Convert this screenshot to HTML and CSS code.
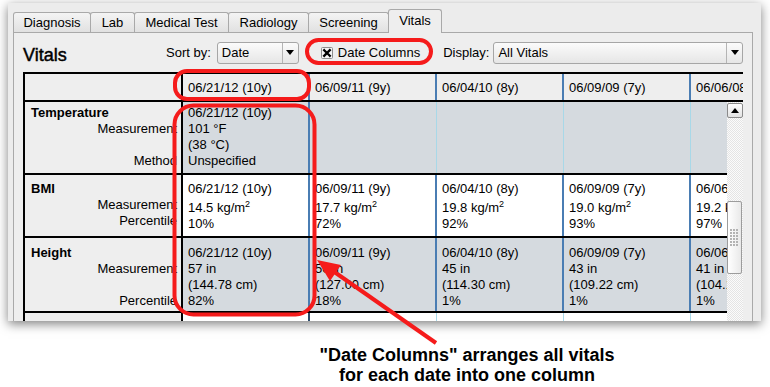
FILE: index.html
```html
<!DOCTYPE html>
<html>
<head>
<meta charset="utf-8">
<link rel="stylesheet" href="styles.css">
</head>
<body>
<div class="window">
  <div class="tabs">
    <div class="tab w-diag">Diagnosis</div>
    <div class="tab w-lab">Lab</div>
    <div class="tab w-med">Medical Test</div>
    <div class="tab w-rad">Radiology</div>
    <div class="tab w-scr">Screening</div>
    <div class="tab active w-vit">Vitals</div>
  </div>
  <div class="panel">
    <div class="toolbar">
      <div class="title">Vitals</div>
      <span class="lbl">Sort by:</span>
      <div class="select sort"><span class="val">Date</span><span class="arr"></span></div>
      <div class="check">
        <svg class="box" width="12" height="12" viewBox="0 0 12 12"><rect x="0.5" y="0.5" width="11" height="11" rx="1" fill="#f4f4f4" stroke="#8e8e8e"/><path d="M3.2 3.2L8.8 8.8M8.8 3.2L3.2 8.8" stroke="#000" stroke-width="2.3" stroke-linecap="square"/></svg>
        <span>Date Columns</span>
      </div>
      <span class="lbl disp">Display:</span>
      <div class="select display"><span class="val">All Vitals</span><span class="arr"></span></div>
    </div>
    <div class="grid">
      <div class="head">
        <div class="lab"></div>
        <div class="hc">06/21/12 (10y)</div>
        <div class="hc">06/09/11 (9y)</div>
        <div class="hc">06/04/10 (8y)</div>
        <div class="hc">06/09/09 (7y)</div>
        <div class="hc">06/06/08 (6y)</div>
      </div>
      <div class="bodywrap">
        <div class="body">
          <div class="row grey r1">
            <div class="lab"><div class="name">Temperature</div><div class="sub">Measurement</div><div class="sub">&nbsp;</div><div class="sub">Method</div></div>
            <div class="c f"><div>06/21/12 (10y)</div><div>101 °F</div><div>(38 °C)</div><div>Unspecified</div></div>
            <div class="c"></div>
            <div class="c"></div>
            <div class="c"></div>
            <div class="c"></div>
          </div>
          <div class="row white r2">
            <div class="lab"><div class="name">BMI</div><div class="sub">Measurement</div><div class="sub">Percentile</div></div>
            <div class="c f"><div>06/21/12 (10y)</div><div class="m">14.5 kg/m<sup>2</sup></div><div>10%</div></div>
            <div class="c f"><div>06/09/11 (9y)</div><div class="m">17.7 kg/m<sup>2</sup></div><div>72%</div></div>
            <div class="c f"><div>06/04/10 (8y)</div><div class="m">19.8 kg/m<sup>2</sup></div><div>92%</div></div>
            <div class="c f"><div>06/09/09 (7y)</div><div class="m">19.0 kg/m<sup>2</sup></div><div>93%</div></div>
            <div class="c f"><div>06/06/08 (6y)</div><div class="m">19.2 kg/m<sup>2</sup></div><div>97%</div></div>
          </div>
          <div class="row grey r3">
            <div class="lab"><div class="name">Height</div><div class="sub">Measurement</div><div class="sub">&nbsp;</div><div class="sub">Percentile</div></div>
            <div class="c f"><div>06/21/12 (10y)</div><div>57 in</div><div>(144.78 cm)</div><div>82%</div></div>
            <div class="c f"><div>06/09/11 (9y)</div><div>50 in</div><div>(127.00 cm)</div><div>18%</div></div>
            <div class="c f"><div>06/04/10 (8y)</div><div>45 in</div><div>(114.30 cm)</div><div>1%</div></div>
            <div class="c f"><div>06/09/09 (7y)</div><div>43 in</div><div>(109.22 cm)</div><div>1%</div></div>
            <div class="c f"><div>06/06/08 (6y)</div><div>41 in</div><div>(104.14 cm)</div><div>1%</div></div>
          </div>
          <div class="row white r4">
            <div class="lab"></div>
            <div class="c f4"></div>
            <div class="c"></div>
            <div class="c"></div>
            <div class="c"></div>
            <div class="c"></div>
          </div>
        </div>
        <div class="scroll">
          <div class="sbtn"><span class="up"></span></div>
          <div class="thumb"><span class="grip"></span></div>
        </div>
      </div>
    </div>
  </div>
</div>
<p class="caption">"Date Columns" arranges all vitals<br>for each date into one column</p>
<svg class="marks" width="770" height="387" viewBox="0 0 770 387">
  <g fill="none" stroke="#f51b1b" stroke-width="4">
    <rect x="175" y="71" width="134" height="28" rx="12"/>
    <rect x="307" y="40" width="124" height="23" rx="11.5"/>
    <rect x="174.5" y="105.5" width="140" height="209" rx="19"/>
    <line x1="436" y1="343" x2="333" y2="271"/>
  </g>
  <polygon fill="#f51b1b" points="317,260 341,265 330,281"/>
</svg>
</body>
</html>
```

FILE: styles.css
```css
* { box-sizing: border-box; }
html { overflow: hidden; }
html, body { margin: 0; }
body {
  width: 770px;
  height: 387px;
  overflow: hidden;
  padding: 3px 0 0 8px;
  background: #fff;
  font-family: "Liberation Sans", Arial, sans-serif;
  font-size: 13px;
  color: #000;
  position: relative;
}

.window {
  width: 753px;
  height: 318px;
  background: #ececec;
  box-shadow: 0 3px 10px rgba(0,0,0,0.5);
  overflow: hidden;
}

/* tabs */
.tabs {
  display: flex;
  align-items: flex-end;
  height: 29px;
  padding-left: 5px;
}
.tab {
  height: 20px;
  border: 1px solid #a9a9a9;
  border-bottom: none;
  border-radius: 3px 3px 0 0;
  background: linear-gradient(#f4f4f4, #e1e1e1);
  text-align: center;
  line-height: 19px;
  margin-left: -1px;
  white-space: nowrap;
}
.tab:first-child { margin-left: 0; }
.tab.active {
  height: 24px;
  margin-bottom: -1px;
  background: #eeeeee;
  line-height: 22px;
  position: relative;
  z-index: 1;
}
.w-diag { width: 78px; }
.w-lab { width: 45px; }
.w-med { width: 95px; }
.w-rad { width: 81px; }
.w-scr { width: 81px; }
.w-vit { width: 54px; }

/* panel */
.panel {
  margin-left: 5px;
  width: 740px;
  height: 400px;
  border: 1px solid #a9a9a9;
  background: #eeeeee;
  padding: 0 9px;
}

.toolbar {
  display: flex;
  align-items: center;
  height: 39px;
}
.title {
  width: 143px;
  font-size: 18px;
  line-height: 18px;
  padding-top: 5px;
  -webkit-text-stroke: 0.45px #000;
}
.lbl { line-height: 16px; white-space: nowrap; }
.lbl.disp { margin-left: 23px; }

.select {
  display: flex;
  align-items: center;
  height: 22px;
  border: 1px solid #a6a6a6;
  border-radius: 3px;
  background: linear-gradient(#fbfbfb, #e6e6e6);
}
.select .val { flex: 1; padding-left: 4px; line-height: 20px; white-space: nowrap; }
.select .arr {
  width: 16px;
  height: 100%;
  border-left: 1px solid #b4b4b4;
  display: flex;
  align-items: center;
  justify-content: center;
}
.select .arr::before {
  content: "";
  border-left: 4px solid transparent;
  border-right: 4px solid transparent;
  border-top: 5px solid #000;
}
.select.sort { width: 82px; margin-left: 6px; }
.select.display { flex: 1; margin-left: 4px; }

.check {
  display: flex;
  align-items: center;
  margin-left: 22px;
  line-height: 16px;
  white-space: nowrap;
}
.check .box { margin-right: 5px; }

/* grid */
.head {
  display: flex;
  width: 720px;
  height: 30px;
  border-top: 2px solid #000;
  border-bottom: 2px solid #000;
  border-left: 2px solid #000;
  background: #eeeeee;
  overflow: hidden;
}
.head .lab { width: 158px; flex: none; border-right: 2px solid #000; }
.hc {
  width: 127px;
  flex: none;
  padding-left: 5px;
  line-height: 27px;
  white-space: nowrap;
  box-shadow: inset -2px 0 #4a7db3;
}

.bodywrap { display: flex; height: 240px; }
.body {
  width: 704px;
  border-left: 2px solid #000;
  overflow: hidden;
}
.row {
  display: flex;
  border-bottom: 2px solid #000;
}
.row .lab {
  width: 158px;
  flex: none;
  border-right: 2px solid #000;
  background: #eeeeee;
  padding-left: 6px;
  padding-right: 4px;
  line-height: 16px;
  white-space: nowrap;
}
.lab .name { font-weight: bold; }
.lab .sub { text-align: right; }
.c {
  width: 127px;
  flex: none;
  padding-left: 5px;
  line-height: 16px;
  white-space: nowrap;
  overflow: hidden;
  box-shadow: inset -1px 0 #a8d8e8;
}
.c.f { box-shadow: inset -2px 0 #4a7db3; }
.c.f4 { box-shadow: inset -2px 0 #2c4a6a; }
.grey .c { background: #d5dadf; }
.white .c { background: #fff; }
.c .m { padding-top: 3px; }
sup { font-size: 9px; line-height: 1; vertical-align: 5px; }

.row.r1 { height: 73px; }
.row.r1 > div { padding-top: 3px; }
.row.r2 { height: 63px; }
.row.r2 > div { padding-top: 6px; }
.row.r3 { height: 75px; }
.row.r3 > div { padding-top: 7px; }
.row.r4 { height: 40px; }

/* scrollbar */
.scroll {
  width: 16px;
  background: repeating-conic-gradient(#e4e4e4 0 25%, #fbfbfb 0 50%) 0 0 / 2px 2px;
  padding-top: 1px;
}
.sbtn {
  height: 15px;
  border: 1px solid #8a8a8a;
  border-radius: 2px;
  background: linear-gradient(#ffffff, #e2e2e2);
  display: flex;
  align-items: center;
  justify-content: center;
}
.sbtn .up {
  border-left: 4px solid transparent;
  border-right: 4px solid transparent;
  border-bottom: 5px solid #000;
}
.thumb {
  margin-top: 83px;
  height: 73px;
  width: 15px;
  border: 1px solid #9c9c9c;
  border-radius: 2px;
  background: linear-gradient(to right, #ffffff, #e9e9e9);
  display: flex;
  align-items: center;
  justify-content: center;
}
.thumb .grip {
  width: 9px;
  height: 18px;
  background: radial-gradient(circle at 1px 1px, #b0b0b0 0.7px, transparent 0.9px) 0 0 / 3px 3px;
}

/* caption */
.caption {
  margin: 24px 0 0 309px;
  width: 300px;
  text-align: center;
  font-weight: bold;
  font-size: 18px;
  line-height: 20px;
}

.marks {
  position: absolute;
  left: 0;
  top: 0;
  pointer-events: none;
}
```
